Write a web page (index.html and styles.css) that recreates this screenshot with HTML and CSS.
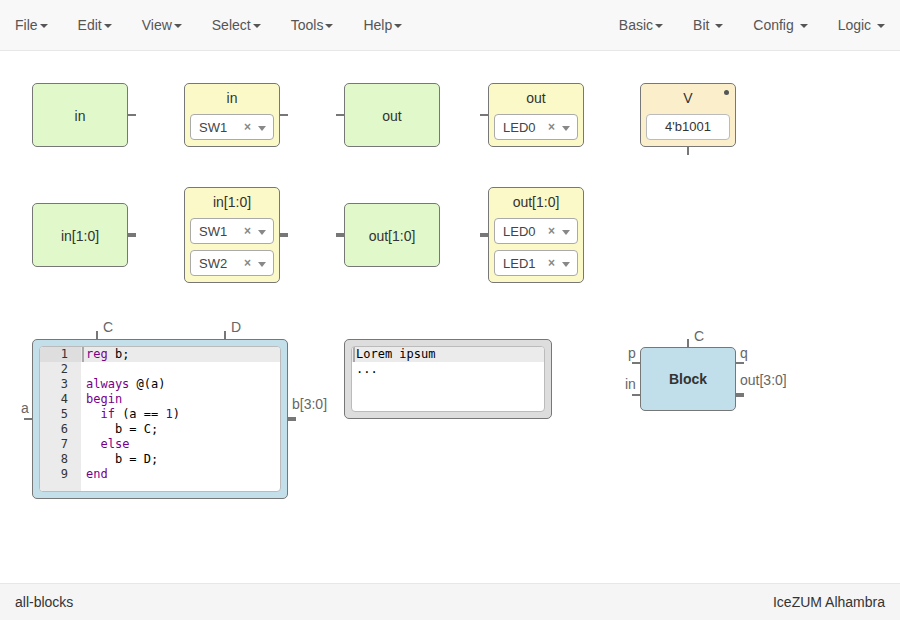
FILE: index.html
```html
<!DOCTYPE html>
<html lang="en">
<head>
    <meta charset="UTF-8">
    <meta name="viewport" content="width=device-width, initial-scale=1.0">
    <title>all-blocks</title>
    <link rel="stylesheet" href="styles.css">
</head>
<body>

    <nav class="menubar">
        <ul class="menu">
            <li>File<span class="caret"></span></li>
            <li>Edit<span class="caret"></span></li>
            <li>View<span class="caret"></span></li>
            <li>Select<span class="caret"></span></li>
            <li>Tools<span class="caret"></span></li>
            <li>Help<span class="caret"></span></li>
        </ul>
        <ul class="menu menu-right">
            <li>Basic<span class="caret"></span></li>
            <li>Bit <span class="caret"></span></li>
            <li>Config <span class="caret"></span></li>
            <li>Logic <span class="caret"></span></li>
        </ul>
    </nav>

    <main class="canvas">
        <!-- row 1: single bit io -->
        <div class="block io n-in">
            in
            <span class="wire right"></span>
        </div>
        <div class="block pin n-in-pin">
            <div class="pin-title">in</div>
            <div class="select"><span class="select-val">SW1</span><span class="select-clear">×</span><span class="select-arrow"></span></div>
            <span class="wire right"></span>
        </div>
        <div class="block io n-out">
            out
            <span class="wire left"></span>
        </div>
        <div class="block pin n-out-pin">
            <div class="pin-title">out</div>
            <div class="select"><span class="select-val">LED0</span><span class="select-clear">×</span><span class="select-arrow"></span></div>
            <span class="wire left"></span>
        </div>
        <div class="block pin const n-const">
            <div class="pin-title">V</div>
            <div class="const-value">4'b1001</div>
            <span class="const-dot"></span>
            <span class="vwire const-wire"></span>
        </div>

        <!-- row 2: buses -->
        <div class="block io n-in-bus">
            in[1:0]
            <span class="wire right bus"></span>
        </div>
        <div class="block pin n-in-bus-pin">
            <div class="pin-title">in[1:0]</div>
            <div class="select"><span class="select-val">SW1</span><span class="select-clear">×</span><span class="select-arrow"></span></div>
            <div class="select"><span class="select-val">SW2</span><span class="select-clear">×</span><span class="select-arrow"></span></div>
            <span class="wire right bus"></span>
        </div>
        <div class="block io n-out-bus">
            out[1:0]
            <span class="wire left bus"></span>
        </div>
        <div class="block pin n-out-bus-pin">
            <div class="pin-title">out[1:0]</div>
            <div class="select"><span class="select-val">LED0</span><span class="select-clear">×</span><span class="select-arrow"></span></div>
            <div class="select"><span class="select-val">LED1</span><span class="select-clear">×</span><span class="select-arrow"></span></div>
            <span class="wire left bus"></span>
        </div>

        <!-- row 3: code, info, module -->
        <div class="block code-block n-code">
            <div class="editor">
                <div class="gutter">
                    <div class="ln active">1</div>
                    <div class="ln">2</div>
                    <div class="ln">3</div>
                    <div class="ln">4</div>
                    <div class="ln">5</div>
                    <div class="ln">6</div>
                    <div class="ln">7</div>
                    <div class="ln">8</div>
                    <div class="ln">9</div>
                </div>
                <div class="lines">
                    <div class="line active"><span class="cursor"></span><span class="kw">reg</span> b;</div>
                    <div class="line"> </div>
                    <div class="line"><span class="kw">always</span> @(a)</div>
                    <div class="line"><span class="kw">begin</span></div>
                    <div class="line">  <span class="kw">if</span> (a == <span class="num">1</span>)</div>
                    <div class="line">    b = C;</div>
                    <div class="line">  <span class="kw">else</span></div>
                    <div class="line">    b = D;</div>
                    <div class="line"><span class="kw">end</span></div>
                </div>
            </div>
            <span class="lbl code-a">a</span>
            <span class="wire code-a-wire"></span>
            <span class="lbl code-c">C</span>
            <span class="vwire code-c-wire"></span>
            <span class="lbl code-d">D</span>
            <span class="vwire code-d-wire"></span>
            <span class="lbl code-b">b[3:0]</span>
            <span class="wire bus code-b-wire"></span>
        </div>

        <div class="block info-block n-info">
            <div class="editor">
                <div class="lines">
                    <div class="line active"><span class="cursor"></span>Lorem ipsum</div>
                    <div class="line">...</div>
                </div>
            </div>
        </div>

        <div class="block module n-module">
            Block
            <span class="lbl mod-c">C</span>
            <span class="vwire mod-c-wire"></span>
            <span class="lbl mod-p">p</span>
            <span class="wire mod-p-wire"></span>
            <span class="lbl mod-in">in</span>
            <span class="wire mod-in-wire"></span>
            <span class="lbl mod-q">q</span>
            <span class="wire mod-q-wire"></span>
            <span class="lbl mod-out">out[3:0]</span>
            <span class="wire bus mod-out-wire"></span>
        </div>
    </main>

    <footer class="statusbar">
        <span>all-blocks</span>
        <span>IceZUM Alhambra</span>
    </footer>

</body>
</html>
```

FILE: styles.css
```css
body {
    margin: 0;
    height: 620px;
    display: flex;
    flex-direction: column;
    font-family: "Liberation Sans", Arial, sans-serif;
    font-size: 14px;
    color: #333;
    background-color: white;
    overflow: hidden;
}

/* top menu */
.menubar {
    display: flex;
    height: 50px;
    background-color: #f8f8f8;
    border-bottom: 1px solid #e7e7e7;
}
.menu {
    display: flex;
    list-style: none;
    margin: 0;
    padding: 0;
}
.menu-right {
    margin-left: auto;
}
.menu li {
    padding: 15px;
    line-height: 20px;
    color: #555;
    cursor: pointer;
}
.caret {
    display: inline-block;
    width: 0;
    height: 0;
    margin-left: 2px;
    vertical-align: middle;
    border-top: 4px solid;
    border-right: 4px solid transparent;
    border-left: 4px solid transparent;
}

/* design canvas */
.canvas {
    flex: 1;
    position: relative;
}
.block {
    position: absolute;
    box-sizing: border-box;
    border: 1px solid #777;
    border-radius: 5px;
}
.io {
    width: 96px;
    height: 64px;
    padding-top: 1px;
    background-color: #e0f8ca;
    display: flex;
    align-items: center;
    justify-content: center;
}
.pin {
    width: 96px;
    background-color: #fbf9c8;
    padding: 5px 5px 6px;
    display: flex;
    flex-direction: column;
    gap: 6px;
}
.pin-title {
    text-align: center;
    line-height: 19px;
}
.const {
    background-color: #fbefcb;
}
.select {
    height: 26px;
    box-sizing: border-box;
    border: 1px solid #aaa;
    border-radius: 4px;
    background-color: white;
    display: flex;
    align-items: center;
    padding: 0 7px 0 8px;
    font-size: 13px;
    color: #444;
}
.select-val {
    flex: 1;
}
.select-clear {
    font-weight: bold;
    font-size: 12px;
    color: #888;
    margin-right: 7px;
}
.select-arrow {
    width: 0;
    height: 0;
    margin-top: 2px;
    border-top: 5px solid #888;
    border-left: 4px solid transparent;
    border-right: 4px solid transparent;
}
.const-value {
    height: 26px;
    box-sizing: border-box;
    border: 1px solid #bbb;
    border-radius: 4px;
    background-color: white;
    text-align: center;
    line-height: 24px;
    font-size: 13px;
}
.const-dot {
    position: absolute;
    top: 6px;
    right: 6px;
    width: 5px;
    height: 5px;
    border-radius: 50%;
    background-color: #555;
}

/* wires */
.wire {
    position: absolute;
    width: 8px;
    height: 2px;
    background-color: #777;
    top: calc(50% - 1px);
}
.wire.bus {
    height: 4px;
    top: calc(50% - 2px);
}
.wire.right {
    left: calc(100% + 1px);
}
.wire.left {
    left: -9px;
}
.vwire {
    position: absolute;
    width: 2px;
    height: 8px;
    background-color: #777;
}
.lbl {
    position: absolute;
    line-height: 16px;
    color: #666;
    white-space: nowrap;
}

/* node places on the canvas */
.n-in { left: 32px; top: 32px; }
.n-in-pin { left: 184px; top: 32px; }
.n-out { left: 344px; top: 32px; }
.n-out-pin { left: 488px; top: 32px; }
.n-const { left: 640px; top: 32px; }
.n-in-bus { left: 32px; top: 152px; }
.n-in-bus-pin { left: 184px; top: 136px; }
.n-out-bus { left: 344px; top: 152px; }
.n-out-bus-pin { left: 488px; top: 136px; }
.n-code { left: 32px; top: 288px; }
.n-info { left: 344px; top: 288px; }
.n-module { left: 640px; top: 296px; }

.const-wire { left: 46px; top: 63px; }

/* code block */
.code-block {
    width: 256px;
    height: 160px;
    padding: 6px;
    background-color: #c3dfea;
}
.info-block {
    width: 208px;
    height: 80px;
    padding: 6px;
    background-color: #ddd;
}
.editor {
    height: 100%;
    box-sizing: border-box;
    display: flex;
    background-color: white;
    border: 1px solid #bbb;
    border-radius: 4px;
    overflow: hidden;
    font-family: "DejaVu Sans Mono", monospace;
    font-size: 12px;
    line-height: 15px;
    color: #000;
}
.gutter {
    width: 41px;
    background-color: #ebebeb;
}
.ln {
    text-align: right;
    padding-right: 13px;
    color: #333;
}
.ln.active {
    background-color: #dedede;
}
.lines {
    flex: 1;
}
.line {
    position: relative;
    white-space: pre;
    padding-left: 4px;
    height: 15px;
}
.code-block .line {
    padding-left: 5px;
}
.line.active {
    background-color: #ebebeb;
}
.cursor {
    position: absolute;
    left: 1px;
    top: 0;
    width: 2px;
    height: 15px;
    background-color: #aaa;
}
.kw { color: #708; }
.num { color: #11c; }

.code-block .code-a { left: -12px; top: 60px; }
.code-block .code-a-wire { left: -9px; top: 78px; }
.code-block .code-c { left: 70px; top: -21px; }
.code-block .code-c-wire { left: 63px; top: -9px; }
.code-block .code-d { left: 198px; top: -21px; }
.code-block .code-d-wire { left: 191px; top: -9px; }
.code-block .code-b { left: 259px; top: 56px; }
.code-block .code-b-wire { left: 255px; top: 77px; }

/* module block */
.module {
    width: 96px;
    height: 64px;
    background-color: #c1dfea;
    display: flex;
    align-items: center;
    justify-content: center;
    font-weight: bold;
}
.module .lbl {
    font-weight: normal;
}
.module .mod-c { left: 53px; top: -20px; }
.module .mod-c-wire { left: 46px; top: -9px; }
.module .mod-p { left: -13px; top: -3px; }
.module .mod-p-wire { left: -9px; top: 14px; }
.module .mod-in { left: -16px; top: 28px; }
.module .mod-in-wire { left: -9px; top: 46px; }
.module .mod-q { left: 99px; top: -3px; }
.module .mod-q-wire { left: 95px; top: 14px; }
.module .mod-out { left: 99px; top: 24px; }
.module .mod-out-wire { left: 95px; top: 45px; }

/* bottom bar */
.statusbar {
    height: 36px;
    display: flex;
    align-items: center;
    justify-content: space-between;
    padding: 0 15px;
    background-color: #f5f5f5;
    border-top: 1px solid #e7e7e7;
    color: #333;
}
```
